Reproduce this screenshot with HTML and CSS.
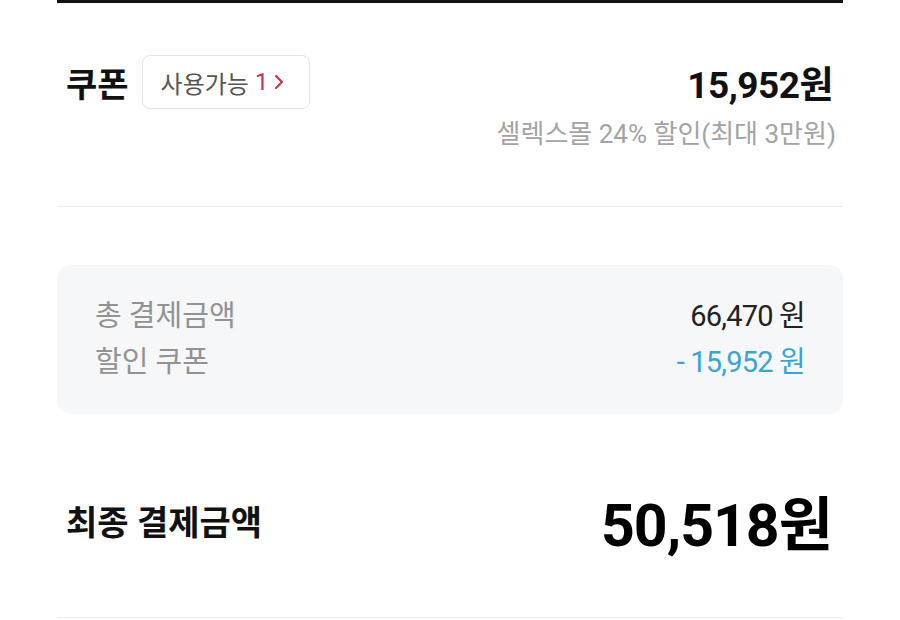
FILE: index.html
```html
<!DOCTYPE html>
<html lang="ko">
<head>
<meta charset="utf-8">
<link rel="stylesheet" href="styles.css">
</head>
<body>
<div class="page">
  <section class="coupon">
    <div class="coupon-row">
      <div class="coupon-left">
        <span class="coupon-title">쿠폰</span>
        <span class="badge">사용가능 <span class="badge-count">1</span><svg class="chev" viewBox="0 0 10 18" width="10" height="18"><path d="M2 3 L8 9 L2 15" fill="none" stroke="#c8364f" stroke-width="2.2" stroke-linecap="round" stroke-linejoin="round"/></svg></span>
      </div>
      <span class="coupon-price">15,952원</span>
    </div>
    <div class="coupon-desc">셀렉스몰 24% 할인(최대 3만원)</div>
  </section>

  <section class="summary">
    <div class="summary-row">
      <span class="summary-label">총 결제금액</span>
      <span class="summary-value">66,470 원</span>
    </div>
    <div class="summary-row">
      <span class="summary-label">할인 쿠폰</span>
      <span class="summary-value discount">- 15,952 원</span>
    </div>
  </section>

  <section class="final">
    <span class="final-label">최종 결제금액</span>
    <span class="final-value">50,518원</span>
  </section>
</div>
</body>
</html>
```

FILE: styles.css
```css
* { box-sizing: border-box; }
html, body { margin: 0; padding: 0; background: #fff; }
body {
  font-family: "Roboto", "Noto Sans CJK KR", sans-serif;
  color: #111;
}
.page {
  width: 786px;
  margin: 0 0 0 57px;
  border-top: 3px solid #111;
}
.coupon {
  padding: 52px 10px 56px 9px;
  border-bottom: 1px solid #ebebeb;
}
.coupon-row {
  display: flex;
  justify-content: space-between;
  align-items: center;
  height: 54px;
}
.coupon-left {
  display: flex;
  align-items: center;
  gap: 13px;
}
.coupon-title {
  font-size: 34px;
  font-weight: 700;
  color: #111;
}
.badge {
  display: flex;
  align-items: center;
  height: 54px;
  padding: 0 25px 0 18px;
  border: 1px solid #e4e4e4;
  border-radius: 8px;
  font-size: 24px;
  font-weight: 400;
  color: #555;
}
.badge-count {
  color: #c8364f;
  font-weight: 400;
  margin-left: 6px;
  margin-right: 6px;
}
.chev { display: block; }
.coupon-price {
  font-size: 37px;
  font-weight: 700;
  color: #111;
  letter-spacing: -0.5px;
}
.coupon-desc {
  margin-top: 9px;
  text-align: right;
  font-size: 26px;
  line-height: 32px;
  font-weight: 400;
  color: #a3a3a3;
  margin-right: -3px;
}
.summary {
  margin-top: 58px;
  background: #f6f7f9;
  border-radius: 14px;
  padding: 25px 38px 32px 38px;
}
.summary-row {
  display: flex;
  justify-content: space-between;
  align-items: center;
  height: 46px;
}
.summary-label {
  font-size: 29px;
  font-weight: 400;
  color: #929292;
}
.summary-value {
  font-size: 29px;
  font-weight: 400;
  color: #222;
  letter-spacing: -0.8px;
}
.summary-value.discount { color: #3aa6cf; }
.final {
  margin-top: 76px;
  padding: 0 11px 0 9px;
  height: 60px;
  display: flex;
  justify-content: space-between;
  align-items: center;
  margin-bottom: 67px;
}
.final-label {
  font-size: 34px;
  font-weight: 700;
  color: #111;
}
.final-value {
  font-size: 59px;
  font-weight: 700;
  color: #000;
  letter-spacing: -1px;
}
.page::after {
  content: "";
  display: block;
  border-top: 1px solid #ebebeb;
}
```
